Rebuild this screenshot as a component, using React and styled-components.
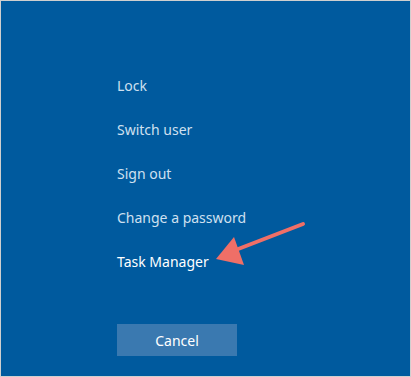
import styled, { createGlobalStyle } from 'styled-components';

const Global = createGlobalStyle`
  html, body { margin: 0; padding: 0; background: #fff; }
`;

const Screen = styled.div`
  position: relative;
  box-sizing: border-box;
  width: 411px;
  height: 377px;
  background: #005a9e;
  border: 1px solid #cfcfcf;
  font-family: "Noto Sans", "Open Sans", sans-serif;
  padding: 73px 0 0 116px;
`;

const Menu = styled.ul`
  list-style: none;
  margin: 0;
  padding: 0;
  display: flex;
  flex-direction: column;
  gap: 20px;
`;

const Item = styled.li`
  font-size: 14px;
  line-height: 24px;
  height: 24px;
  color: ${p => (p.$active ? '#ffffff' : '#cfe0f0')};
  white-space: nowrap;
`;

const CancelButton = styled.button`
  margin-top: 50px;
  width: 120px;
  height: 32px;
  border: none;
  background: #3a79b0;
  color: #ffffff;
  font-family: inherit;
  font-size: 14px;
  padding: 0;
`;

const Arrow = styled.svg`
  position: absolute;
  left: 0;
  top: 0;
  pointer-events: none;
`;

const items = ['Lock', 'Switch user', 'Sign out', 'Change a password', 'Task Manager'];

export default function App() {
  return (
    <>
      <Global />
      <Screen>
        <Menu>
          {items.map(t => (
            <Item key={t} $active={t === 'Task Manager'}>{t}</Item>
          ))}
        </Menu>
        <CancelButton>Cancel</CancelButton>
        <Arrow width="411" height="377" viewBox="0 0 411 377">
          <line x1="302" y1="223" x2="232" y2="250" stroke="#ef6f67" strokeWidth="4" strokeLinecap="round" />
          <polygon points="215,258 233,236 243,264" fill="#ef6f67" />
        </Arrow>
      </Screen>
    </>
  );
}
